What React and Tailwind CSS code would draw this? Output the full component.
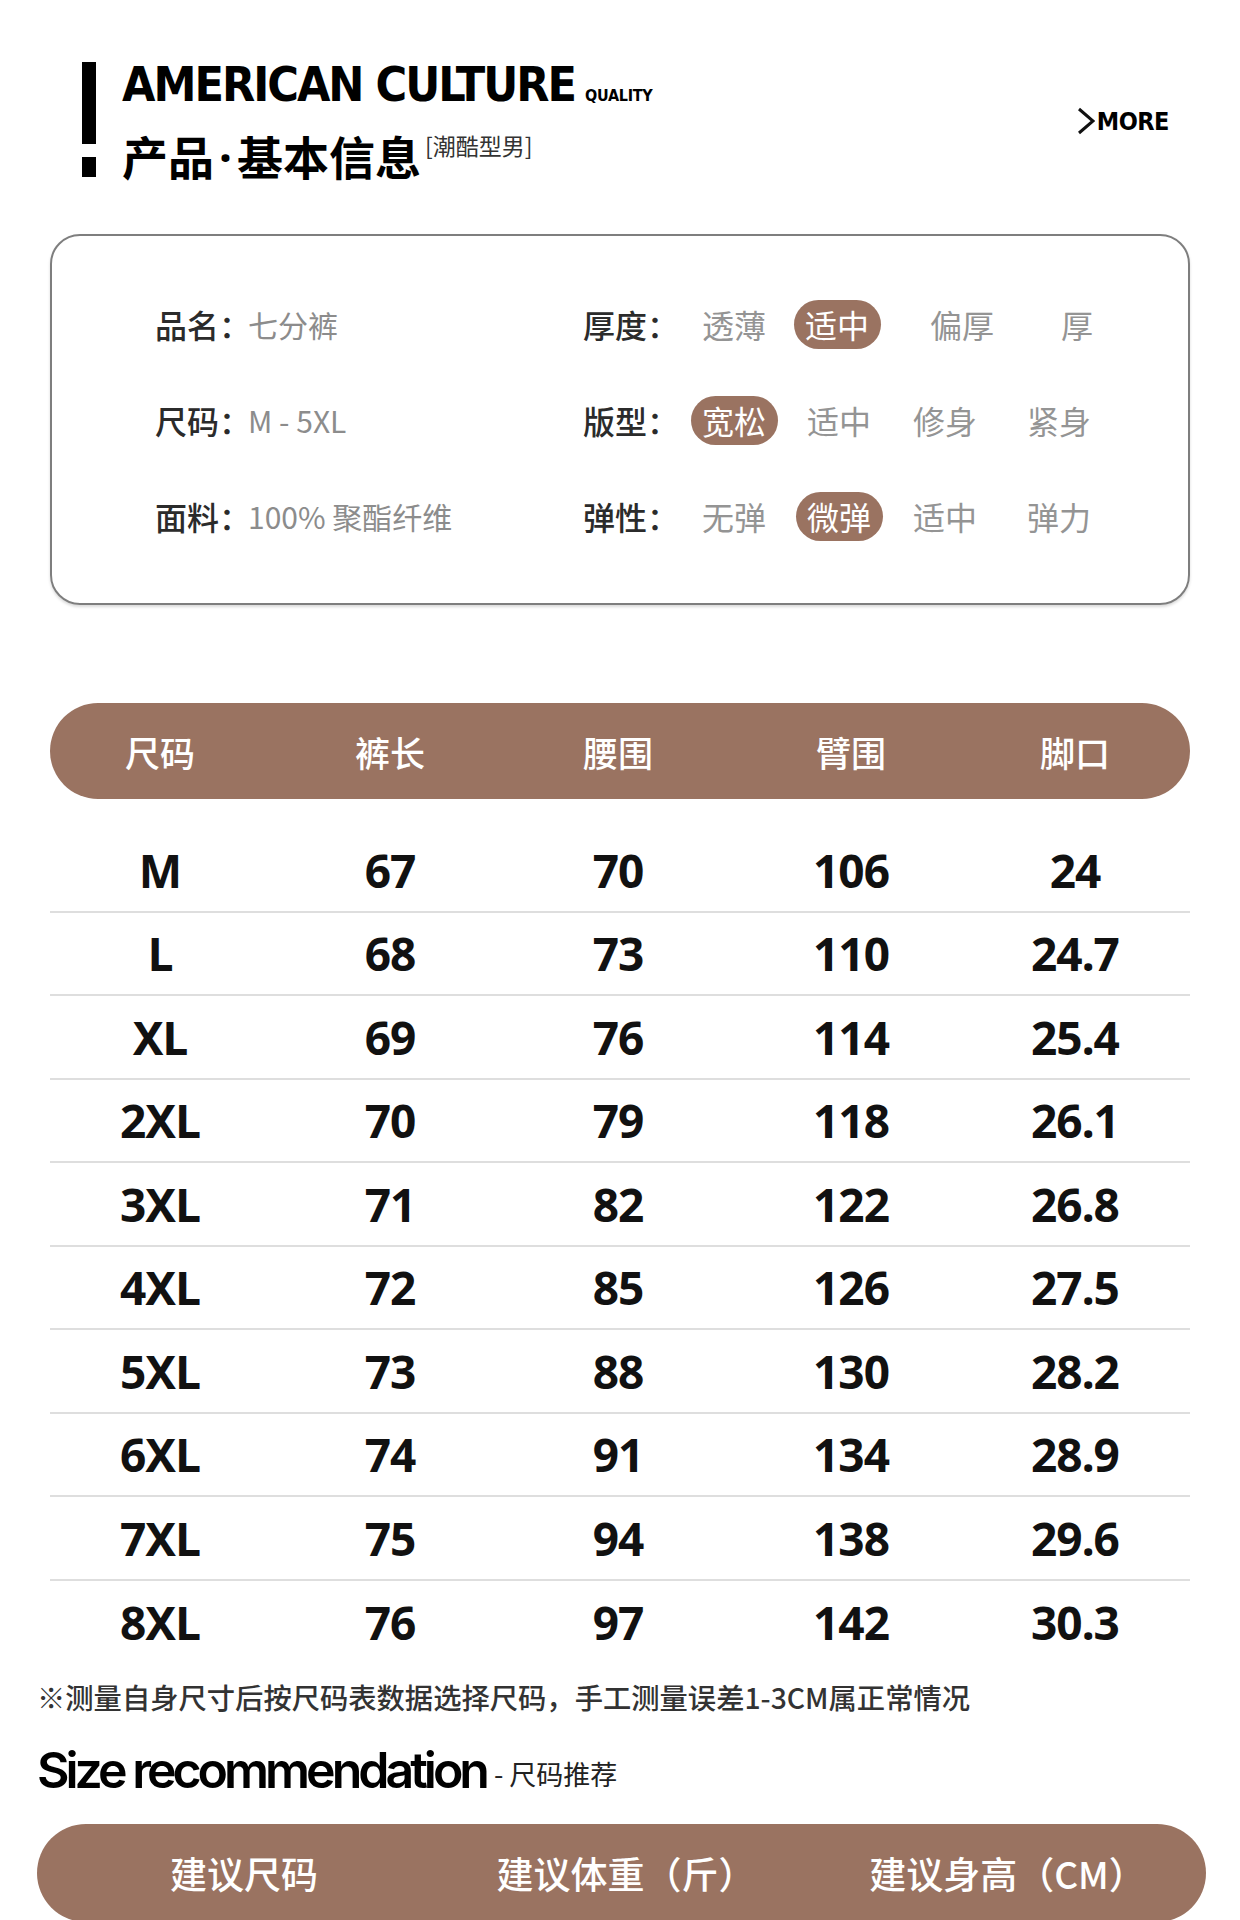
const CJK = "font-['Noto_Sans_CJK_SC',sans-serif]";

const infoRows = [
    {
        label: "品名",
        value: "七分裤",
        attr: "厚度",
        cols: "grid-cols-[104px_102px_148px_82px]",
        options: ["透薄", "适中", "偏厚", "厚"],
        active: 1,
    },
    {
        label: "尺码",
        value: "M - 5XL",
        attr: "版型",
        cols: "grid-cols-[104px_106px_106px_122px]",
        options: ["宽松", "适中", "修身", "紧身"],
        active: 0,
    },
    {
        label: "面料",
        value: "100% 聚酯纤维",
        attr: "弹性",
        cols: "grid-cols-[104px_106px_106px_122px]",
        options: ["无弹", "微弹", "适中", "弹力"],
        active: 1,
    },
];

const columns = ["尺码", "裤长", "腰围", "臂围", "脚口"];

const sizes = [
    ["M", "67", "70", "106", "24"],
    ["L", "68", "73", "110", "24.7"],
    ["XL", "69", "76", "114", "25.4"],
    ["2XL", "70", "79", "118", "26.1"],
    ["3XL", "71", "82", "122", "26.8"],
    ["4XL", "72", "85", "126", "27.5"],
    ["5XL", "73", "88", "130", "28.2"],
    ["6XL", "74", "91", "134", "28.9"],
    ["7XL", "75", "94", "138", "29.6"],
    ["8XL", "76", "97", "142", "30.3"],
];

const gridCols = "grid grid-cols-[220px_240px_216px_250px_198px]";

export default function App() {
    return (
        <div className={`w-[1240px] h-[1920px] overflow-hidden bg-white text-black ${CJK}`}>
            {/* HEADER */}
            <header className="h-[234px] flex items-start pl-[82px] pr-[71px] pt-[62px]">
                <div className="flex flex-col w-[14px]">
                    <div className="h-[82px] bg-black" />
                    <div className="mt-[13px] h-[20px] bg-black" />
                </div>

                <div className="ml-[26px] flex flex-col">
                    <div className="flex items-baseline font-['DejaVu_Sans_Condensed','DejaVu_Sans',sans-serif] font-bold">
                        <span className="-mt-[2px] text-[48px] leading-none tracking-[-2px]">AMERICAN CULTURE</span>
                        <span className="ml-[10px] text-[16px] leading-none tracking-[-0.3px]">QUALITY</span>
                    </div>
                    <div className="mt-[24px] flex items-start">
                        <span className="text-[46px] leading-none font-bold">
                            产品<span className="mx-[5px] font-['Noto_Sans',sans-serif]">·</span>基本信息
                        </span>
                        <span className="ml-[4px] mt-[2px] text-[23px] leading-none text-[#333]">[潮酷型男]</span>
                    </div>
                </div>

                <div className="ml-auto mt-[45px] flex items-center gap-[2px]">
                    <svg width="18" height="28" viewBox="0 0 18 28" fill="none">
                        <polyline points="2,2 16,14 2,26" stroke="#111" strokeWidth="3" />
                    </svg>
                    <span className="font-['DejaVu_Sans_Condensed','DejaVu_Sans',sans-serif] font-bold text-[25px] leading-none tracking-[-0.5px]">
                        MORE
                    </span>
                </div>
            </header>

            {/* BASIC INFO CARD */}
            <section className="mx-[50px] h-[371px] rounded-[30px] border-2 border-[#7e7e7e] pt-[40px] shadow-[0_2px_3px_rgba(0,0,0,0.15)]">
                {infoRows.map((row) => (
                    <div key={row.label} className="h-[96px] flex items-center text-[32px] leading-none">
                        <div className="w-[531px] pl-[103px] flex items-center">
                            <span className="font-medium text-[#2b2b2b]">{row.label}：</span>
                            <span className="-ml-[3px] text-[30px] text-[#8c8c8c]">{row.value}</span>
                        </div>
                        <span className="w-[99px] font-medium text-[#2b2b2b]">{row.attr}：</span>
                        <div className={`grid ${row.cols}`}>
                            {row.options.map((opt, i) => (
                                <div key={i} className="flex justify-center">
                                    {i === row.active ? (
                                        <span className="w-[87px] h-[49px] rounded-full bg-[#9a7361] text-white flex items-center justify-center">
                                            {opt}
                                        </span>
                                    ) : (
                                        <span className="h-[49px] flex items-center text-[#949494]">{opt}</span>
                                    )}
                                </div>
                            ))}
                        </div>
                    </div>
                ))}
            </section>

            {/* SIZE TABLE */}
            <section className="mx-[50px] mt-[98px]">
                <div className={`${gridCols} h-[96px] items-center rounded-full bg-[#9a7361] text-white text-[35px] leading-none font-medium`}>
                    {columns.map((c) => (
                        <span key={c} className="text-center">{c}</span>
                    ))}
                </div>

                <div className="mt-[30px] font-['Noto_Sans','Noto_Sans_CJK_SC',sans-serif] font-bold text-[46px] leading-none text-[#111]">
                    {sizes.map((row, r) => (
                        <div
                            key={row[0]}
                            className={`${gridCols} h-[83.5px] items-center ${r < sizes.length - 1 ? "border-b-2 border-[#dedede]" : ""}`}
                        >
                            {row.map((v, i) => (
                                <span key={i} className="text-center tracking-[-1px]">{v}</span>
                            ))}
                        </div>
                    ))}
                </div>
            </section>

            {/* NOTE */}
            <p className="h-[66px] pl-[37px] flex items-center text-[28.3px] leading-none font-medium text-[#333]">
                ※测量自身尺寸后按尺码表数据选择尺码，手工测量误差1-3CM属正常情况
            </p>

            {/* RECOMMENDATION */}
            <div className="h-[80px] pl-[37px] flex items-center">
                <span className="font-['Inter',sans-serif] font-semibold text-[50px] leading-none tracking-[-4px]">
                    Size recommendation
                </span>
                <span className="ml-[8px] mt-[6px] text-[27px] leading-none text-[#222]">- 尺码推荐</span>
            </div>

            <div className="mt-[14px] ml-[37px] w-[1169px] h-[98px] rounded-full bg-[#9a7361] text-white text-[37px] leading-none font-medium grid grid-cols-[414px_350px_413px] items-center">
                <span className="text-center">建议尺码</span>
                <span className="text-center">建议体重（斤）</span>
                <span className="text-center">建议身高（CM）</span>
            </div>
        </div>
    );
}
